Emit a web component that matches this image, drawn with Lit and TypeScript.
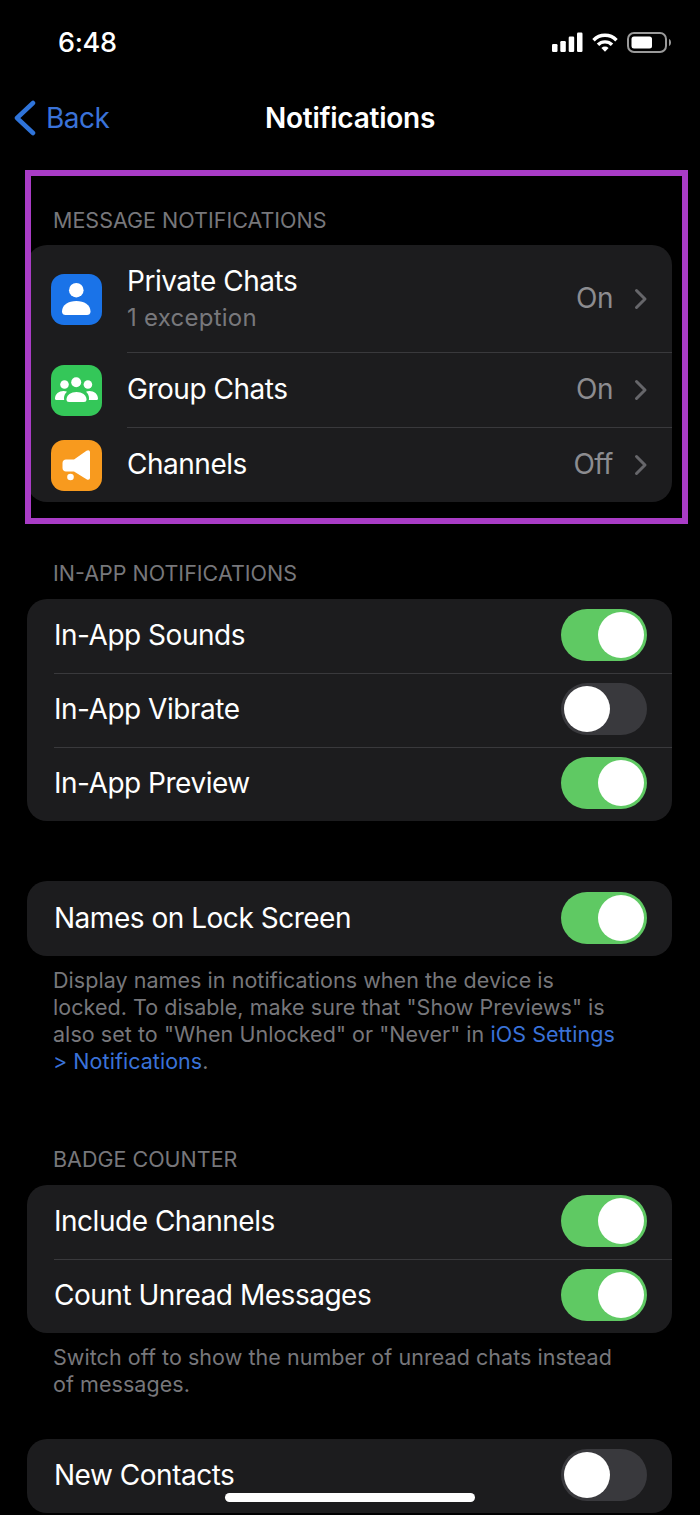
import { LitElement, html, css, nothing } from "lit";
import { customElement, property } from "lit/decorators.js";

@customElement("ios-toggle")
class IosToggle extends LitElement {
  @property({ type: Boolean }) on = false;

  static styles = css`
    :host {
      display: block;
      flex: none;
    }
    .track {
      width: 86px;
      height: 52px;
      border-radius: 26px;
      background: #39393d;
      display: flex;
      align-items: center;
      padding: 0 3px;
      box-sizing: border-box;
    }
    .track.on {
      background: #5fc963;
      justify-content: flex-end;
    }
    .knob {
      width: 46px;
      height: 46px;
      border-radius: 50%;
      background: #fff;
    }
  `;

  render() {
    return html`<div class="track ${this.on ? "on" : ""}"><div class="knob"></div></div>`;
  }
}

const personIcon = html`<svg viewBox="0 0 51 51" width="51" height="51" fill="#fff">
  <circle cx="25.300" cy="16.200" r="7.300" />
  <path d="M11 37.500C11 31 17.500 27 25.300 27s14.200 4 14.200 10.500c0 2.500-1.500 3.500-3.500 3.500H14.500c-2 0-3.500-1-3.500-3.500z" />
</svg>`;

const groupIcon = html`<svg viewBox="0 0 51 51" width="51" height="51" fill="#fff">
  <circle cx="25.200" cy="17.200" r="5" />
  <circle cx="13.500" cy="19.500" r="4.300" />
  <circle cx="36.900" cy="19.500" r="4.300" />
  <path d="M15.500 34.500c0-4.500 4.500-7.500 10-7.500s10 3 10 7.500c0 1.700-1 2.500-2.500 2.500H18c-1.500 0-2.500-.8-2.500-2.500z" />
  <path d="M4 33.500C4 29 8 26 12.500 26c1.500 0 2.700.3 3.500.7-1.800 1.600-3 3.700-3 6.300 0 .8 0 1.400.2 2H6c-1.300 0-2-.3-2-1.500z" />
  <path d="M47 33.500C47 29 43 26 38.500 26c-1.500 0-2.700.3-3.500.7 1.800 1.600 3 3.700 3 6.300 0 .8 0 1.400-.2 2H45c1.300 0 2-.3 2-1.500z" />
</svg>`;

const megaphoneIcon = html`<svg viewBox="0 0 51 51" width="51" height="51" fill="#fff">
  <path d="M35.500 10.800c2-1.300 3.500-.3 3.500 1.700v25c0 2-1.500 3-3.500 1.700L23 31.500h-8c-2 0-3.500-1.500-3.500-3.500v-5c0-2 1.500-3.500 3.500-3.500h8z" />
  <circle cx="19.500" cy="37" r="3.300" />
</svg>`;

@customElement("app-root")
class AppRoot extends LitElement {
  static styles = css`
    :host {
      display: block;
      position: relative;
      height: 1515px;
      overflow: hidden;
      background: #000;
      color: #fff;
      font-family: Inter, "Liberation Sans", sans-serif;
    }
    .status {
      height: 84px;
      padding: 0 29px 0 58px;
      display: flex;
      align-items: center;
      justify-content: space-between;
      box-sizing: border-box;
    }
    .time {
      font-size: 27px;
      font-weight: 500;
      letter-spacing: -0.3px;
    }
    .status-icons {
      display: flex;
      align-items: center;
      gap: 9px;
    }
    .nav {
      height: 68px;
      display: flex;
      align-items: center;
      justify-content: center;
      position: relative;
      font-size: 28px;
      font-weight: 600;
      letter-spacing: -0.25px;
    }
    .back {
      position: absolute;
      left: 13px;
      top: 0;
      bottom: 0;
      display: flex;
      align-items: center;
      gap: 10px;
      color: #3a72d8;
      font-weight: 400;
      letter-spacing: -0.5px;
    }
    .content {
      padding: 0 28px 0 27px;
    }
    .section-title {
      font-size: 21.500px;
      color: #77777b;
      padding: 0 0 0 26px;
      line-height: 26px;
    }
    .card {
      background: #1c1c1e;
      border-radius: 20px;
      overflow: hidden;
    }
    .row {
      display: flex;
      align-items: center;
      height: 74px;
      box-sizing: border-box;
      padding: 0 25px 2px 27px;
      font-size: 28px;
      letter-spacing: -0.48px;
      position: relative;
    }
    .row + .row::before {
      content: "";
      position: absolute;
      left: 27px;
      right: 0;
      top: 0;
      height: 1px;
      background: #39393c;
    }
    .row .label {
      flex: 1;
    }
    .row.single {
      height: 75px;
    }
    .row.with-icon {
      height: 75px;
      padding: 0 24px 0 24px;
    }
    .row.with-icon + .row::before {
      left: 100px;
    }
    .row.with-icon.tall {
      height: 107px;
    }
    .with-icon .label,
    .with-icon .value {
      padding-bottom: 2px;
    }
    .icon {
      width: 51px;
      height: 51px;
      border-radius: 13px;
      margin: 2px 25px 0 0;
      flex: none;
    }
    .sub {
      font-size: 24px;
      letter-spacing: 0.25px;
      color: #78787c;
      margin-top: 5px;
    }
    .value {
      color: #8c8c90;
    }
    .chev {
      margin-left: 21px;
      flex: none;
    }
    .note {
      font-size: 21.500px;
      letter-spacing: 0.05px;
      line-height: 27px;
      color: #77777b;
      padding: 11px 28px 0 26px;
    }
    .note a {
      color: #3a72d8;
    }
    .highlight {
      position: absolute;
      left: 25px;
      top: 170px;
      width: 663px;
      height: 354px;
      box-sizing: border-box;
      border: 6px solid #a93cc6;
    }
    .home-bar {
      position: absolute;
      left: 225px;
      top: 1493px;
      width: 250px;
      height: 9px;
      border-radius: 5px;
      background: #fff;
    }
  `;

  private iconRow(label: string, sub: string, value: string, color: string, icon: unknown) {
    return html`<div class="row with-icon ${sub ? "tall" : ""}">
      <div class="icon" style="background:${color}">${icon}</div>
      <div class="label">${label}${sub ? html`<div class="sub">${sub}</div>` : nothing}</div>
      <span class="value">${value}</span>
      <svg class="chev" width="14" height="22" viewBox="0 0 14 22" fill="none" stroke="#66666a" stroke-width="3" stroke-linecap="round" stroke-linejoin="round">
        <path d="M2.500 2.500 11 11 2.500 19.500" />
      </svg>
    </div>`;
  }

  private toggleRow(label: string, on: boolean, single = false) {
    return html`<div class="row ${single ? "single" : ""}">
      <span class="label">${label}</span>
      <ios-toggle ?on=${on}></ios-toggle>
    </div>`;
  }

  render() {
    return html`
      <div class="status">
        <span class="time">6:48</span>
        <div class="status-icons">
          <svg width="31" height="20" viewBox="0 0 31 20" fill="#fff">
            <rect x="0" y="12" width="5.500" height="8" rx="1.200" />
            <rect x="8.300" y="9" width="5.500" height="11" rx="1.200" />
            <rect x="16.700" y="4.500" width="5.500" height="15.500" rx="1.200" />
            <rect x="25" y="0.500" width="5.500" height="19.500" rx="1.200" />
          </svg>
          <svg width="26" height="19" viewBox="0 0 26 19" fill="none" stroke="#fff" stroke-width="3.400">
            <path d="M1.500 7.200a16 16 0 0 1 23 0" />
            <path d="M6 11.800a9.800 9.800 0 0 1 14 0" />
            <path d="M13 18.800 9.400 15a5.300 5.300 0 0 1 7.200 0z" fill="#fff" stroke="none" />
          </svg>
          <svg width="44" height="21" viewBox="0 0 44 21" fill="none">
            <rect x="1" y="1" width="38" height="19" rx="6" stroke="#9a9a9a" stroke-width="2" />
            <rect x="4.500" y="4.500" width="20.500" height="12" rx="2.500" fill="#fff" />
            <path d="M42 7c1.300.4 2 2 2 3.500s-.7 3.100-2 3.500z" fill="#9a9a9a" />
          </svg>
        </div>
      </div>
      <div class="nav">
        <div class="back">
          <svg width="23" height="36" viewBox="0 0 23 36" fill="none" stroke="#2f74da" stroke-width="4.500" stroke-linecap="round" stroke-linejoin="round">
            <path d="M20 3 4 18l16 15" />
          </svg>
          <span>Back</span>
        </div>
        Notifications
      </div>
      <div class="content">
        <div class="section-title" style="margin-top:55px">MESSAGE NOTIFICATIONS</div>
        <div class="card" style="margin-top:12px">
          ${this.iconRow("Private Chats", "1 exception", "On", "#1a73e8", personIcon)}
          ${this.iconRow("Group Chats", "", "On", "#34c759", groupIcon)}
          ${this.iconRow("Channels", "", "Off", "#f89a1e", megaphoneIcon)}
        </div>
        <div class="section-title" style="margin-top:58px">IN-APP NOTIFICATIONS</div>
        <div class="card" style="margin-top:13px">
          ${this.toggleRow("In-App Sounds", true)}
          ${this.toggleRow("In-App Vibrate", false)}
          ${this.toggleRow("In-App Preview", true)}
        </div>
        <div class="card" style="margin-top:60px">${this.toggleRow("Names on Lock Screen", true, true)}</div>
        <div class="note">
          Display names in notifications when the device is<br />locked. To disable, make sure that "Show Previews" is<br />also
          set to "When Unlocked" or "Never" in <a>iOS Settings</a><br /><a>&gt; Notifications</a>.
        </div>
        <div class="section-title" style="margin-top:71px">BADGE COUNTER</div>
        <div class="card" style="margin-top:13px">
          ${this.toggleRow("Include Channels", true)} ${this.toggleRow("Count Unread Messages", true)}
        </div>
        <div class="note">Switch off to show the number of unread chats instead<br />of messages.</div>
        <div class="card" style="margin-top:41px">${this.toggleRow("New Contacts", false)}</div>
      </div>
      <div class="highlight"></div>
      <div class="home-bar"></div>
    `;
  }
}
